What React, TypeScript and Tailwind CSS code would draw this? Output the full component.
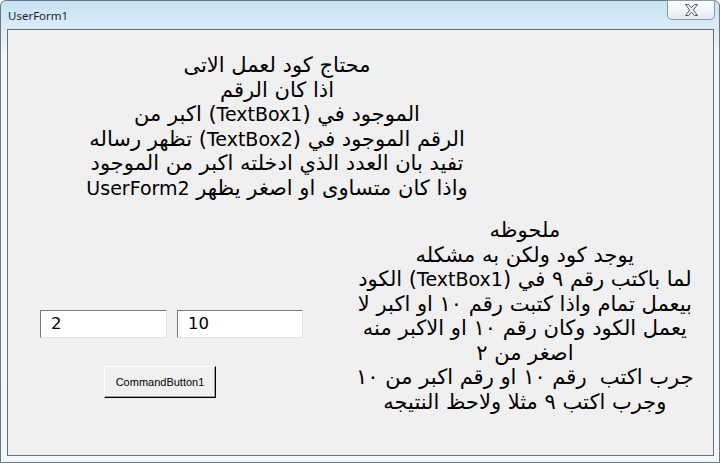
const arabic = { fontFamily: '"DejaVu Sans", sans-serif' }

const note1 = [
    'محتاج كود لعمل الاتى',
    'اذا كان الرقم',
    'الموجود في (TextBox1) اكبر من',
    'الرقم الموجود في (TextBox2) تظهر رساله',
    'تفيد بان العدد الذي ادخلته اكبر من الموجود',
    'واذا كان متساوى او اصغر يظهر UserForm2',
]

const note2 = [
    'ملحوظه',
    'يوجد كود ولكن به مشكله',
    'لما باكتب رقم ٩ في (TextBox1) الكود',
    'بيعمل تمام واذا كتبت رقم ١٠ او اكبر لا',
    'يعمل الكود وكان رقم ١٠ او الاكبر منه',
    'اصغر من ٢',
    'جرب اكتب  رقم ١٠ او رقم اكبر من ١٠',
    'وجرب اكتب ٩ مثلا ولاحظ النتيجه',
]

// latin words (TextBox1, UserForm2) are a bit smaller than the arabic glyphs in the original
const Line = ({ text }: { text: string }) => (
    <div className="whitespace-pre">
        {text.split(/([A-Za-z][A-Za-z0-9]*)/).map((part, i) =>
            /^[A-Za-z]/.test(part) ? <span key={i} className="text-[19px]">{part}</span> : part
        )}
    </div>
)

const Label = ({ lines, className }: { lines: string[]; className: string }) => (
    <div dir="rtl" className={`text-center text-[21px] leading-[24.5px] text-black ${className}`} style={arabic}>
        {lines.map((l, i) => (
            <Line key={i} text={l} />
        ))}
    </div>
)

const TextBox = ({ value, className }: { value: string; className: string }) => (
    <div className={`h-[28px] bg-white border border-t-[#7a7a7a] border-l-[#7a7a7a] border-r-[#e3e3e3] border-b-[#e3e3e3] flex items-center pl-[10px] text-[16.5px] text-black ${className}`} style={arabic}>
        {value}
    </div>
)

const CloseX = () => (
    <svg width="15" height="12" viewBox="0 0 15 12">
        <polygon
            points="1.5,0.5 4.5,0.5 7.5,3.8 10.5,0.5 13.5,0.5 9.3,6 13.5,11.5 10.5,11.5 7.5,8.2 4.5,11.5 1.5,11.5 5.7,6"
            fill="#f4f6f8"
            stroke="#4f5863"
            strokeWidth="1"
            strokeLinejoin="round"
        />
    </svg>
)

export default function App() {
    return (
        <div className="w-[720px] h-[463px] overflow-hidden">
            <div className="w-[720px] h-[463px] flex flex-col border border-[#6b7785] rounded-t-[6px] bg-gradient-to-b from-[#c6e2f3] via-[#f2f8fc] via-[12%] to-[#f3f7fa]">
                {/* title bar */}
                <div className="h-[28px] flex items-start">
                    <span className="pl-[7px] pt-[6px] text-[11.5px] text-[#1e1e1e]" style={{ fontFamily: '"Noto Sans", sans-serif' }}>
                        UserForm1
                    </span>
                    <div className="ml-auto mr-[4px] -mt-px w-[48px] h-[20px] rounded-b-[5px] border border-[#8b98a6] bg-gradient-to-b from-[#ffffff] to-[#e4ecf3] flex items-center justify-center">
                        <CloseX />
                    </div>
                </div>

                {/* client area */}
                <div className="mx-[5px] ml-[6px] mb-[6px] flex-1 border border-[#6e6e6e] bg-[#f0f0f0] flex flex-col">
                    <Label lines={note1} className="mt-[23px] ml-[49px] w-[440px]" />
                    <div className="flex mt-[18px]">
                        <div className="w-[332px] flex flex-col">
                            <div className="flex mt-[92px] ml-[32px] gap-[10px]">
                                <TextBox value="2" className="w-[127px]" />
                                <TextBox value="10" className="w-[126px]" />
                            </div>
                            <div
                                className="mt-[28px] ml-[96px] w-[112px] h-[32px] border border-t-[#fdfdfd] border-l-[#fdfdfd] border-r-[#000] border-b-[#000] shadow-[inset_-1px_-1px_0_#a0a0a0] bg-[#f0f0f0] flex items-center justify-center text-[11px] text-black"
                                style={{ fontFamily: '"Liberation Sans", sans-serif' }}
                            >
                                CommandButton1
                            </div>
                        </div>
                        <Label lines={note2} className="w-[380px]" />
                    </div>
                </div>
            </div>
        </div>
    )
}
